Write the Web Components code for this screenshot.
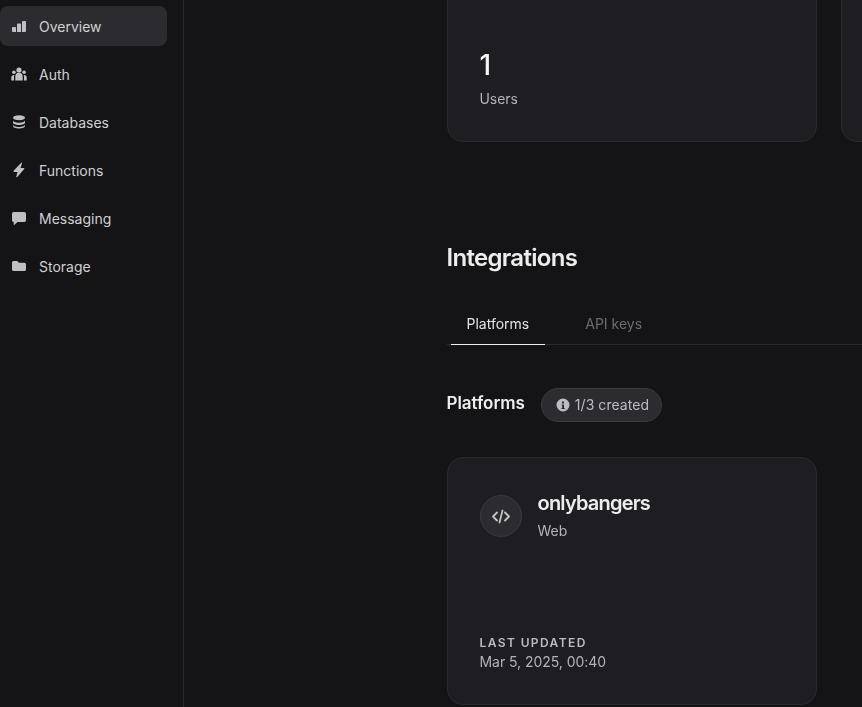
<!DOCTYPE html>
<html>
<head>
<meta charset="utf-8">
<title>Overview</title>
<style>
  html, body { margin: 0; height: 100%; background: #141416; overflow: hidden; }
  body { font-family: Inter, "Liberation Sans", sans-serif; color: #c3c3c6; }
</style>
</head>
<body>
<app-shell>
  <side-nav slot="nav">
    <nav-item active label="Overview"><svg viewBox="0 0 16 16"><path d="M1 10a1 1 0 0 1 1-1h2a1 1 0 0 1 1 1v4H2a1 1 0 0 1-1-1zM6 6.500a1 1 0 0 1 1-1h2a1 1 0 0 1 1 1V14H6zM11 4a1 1 0 0 1 1-1h2a1 1 0 0 1 1 1v9a1 1 0 0 1-1 1h-3z"/></svg></nav-item>
    <nav-item label="Auth"><svg viewBox="0 0 16 16"><circle cx="8" cy="4" r="2.600"/><circle cx="2.900" cy="6.300" r="1.800"/><circle cx="13.100" cy="6.300" r="1.800"/><path d="M4.300 14.500v-4a3.700 3.700 0 0 1 7.400 0v4zM.3 14.500v-3A2.600 2.600 0 0 1 3.400 9 5 5 0 0 0 3 10.500v4zM15.700 14.500v-3A2.600 2.600 0 0 0 12.600 9a5 5 0 0 1 .4 1.500v4z"/></svg></nav-item>
    <nav-item label="Databases"><svg viewBox="0 0 16 16"><ellipse cx="8" cy="3.800" rx="6" ry="2.500"/><path d="M2 6.300c0 1.400 2.700 2.500 6 2.500s6-1.100 6-2.500v2.300c0 1.400-2.700 2.500-6 2.500s-6-1.100-6-2.500zM2 10.500c0 1.400 2.700 2.500 6 2.500s6-1.100 6-2.500V12c0 1.400-2.700 2.500-6 2.500S2 13.400 2 12z"/></svg></nav-item>
    <nav-item label="Functions"><svg viewBox="0 0 16 16"><path d="M10 1 2.600 8.800c-.4.400-.1 1.100.5 1.100h3.400l-1.200 4.600c-.2.600.6 1 1 .6l6.900-8c.4-.4.100-1.100-.5-1.100H9.500l1.500-4.500c.2-.6-.6-1-1-.5z"/></svg></nav-item>
    <nav-item label="Messaging"><svg viewBox="0 0 16 16"><path d="M1 3.700A1.700 1.700 0 0 1 2.700 2h10.600A1.700 1.700 0 0 1 15 3.700v6.600a1.700 1.700 0 0 1-1.700 1.700H6.500l-3 2.800c-.3.300-.8.100-.8-.3V12A1.700 1.700 0 0 1 1 10.300z"/></svg></nav-item>
    <nav-item label="Storage"><svg viewBox="0 0 16 16"><path d="M1 4.500A1.500 1.500 0 0 1 2.500 3h3.700l1.800 1.800h5.500A1.500 1.500 0 0 1 15 6.300v5.200a1.500 1.500 0 0 1-1.500 1.500h-11A1.500 1.500 0 0 1 1 11.500z"/></svg></nav-item>
  </side-nav>
  <overview-page>
    <stat-row>
      <stat-card value="1" label="Users"></stat-card>
      <stat-card></stat-card>
    </stat-row>
    <h-title>Integrations</h-title>
    <tab-bar>
      <tab-link active>Platforms</tab-link>
      <tab-link>API keys</tab-link>
    </tab-bar>
    <section-head>
      <span>Platforms</span>
      <count-pill slot="pill">1/3 created</count-pill>
    </section-head>
    <platform-card name="onlybangers" kind="Web" updated="Mar 5, 2025, 00:40"></platform-card>
  </overview-page>
</app-shell>

<script>
function comp(name, html, init) {
  customElements.define(name, class extends HTMLElement {
    constructor() {
      super();
      this.attachShadow({mode: 'open'}).innerHTML = html;
    }
    connectedCallback() {
      if (init) init(this);
    }
  });
}

comp('app-shell', `
  <style>
    :host { display: flex; height: 707px; overflow: hidden; }
  </style>
  <slot name="nav"></slot>
  <slot></slot>
`);

comp('side-nav', `
  <style>
    :host { display: flex; flex-direction: column; gap: 8px; box-sizing: border-box; width: 184px; flex: none; height: 100%; padding: 6px 16px 0 0; border-right: 1px solid #2b2b2f; }
  </style>
  <slot></slot>
`);

comp('nav-item', `
  <style>
    :host { display: flex; align-items: center; gap: 12px; height: 40px; padding-left: 11px; border-radius: 8px; font-size: 14px; color: #d0d0d3; }
    :host([active]) { background: #2c2c30; }
    ::slotted(svg) { width: 16px; height: 16px; fill: #c0c0c4; flex: none; }
  </style>
  <slot></slot><span></span>
`, el => { el.shadowRoot.querySelector('span').textContent = el.getAttribute('label'); });

comp('overview-page', `
  <style>
    :host { display: block; flex: 1; min-width: 0; padding-left: 263px; overflow: hidden; }
    .inner { margin-top: -40px; will-change: transform; }
  </style>
  <div class="inner"><slot></slot></div>
`);

comp('stat-row', `
  <style>
    :host { display: flex; gap: 24px; width: 760px; }
  </style>
  <slot></slot>
`);

comp('stat-card', `
  <style>
    :host { display: flex; flex-direction: column; justify-content: flex-end; box-sizing: border-box; width: 370px; height: 182px; flex: none; padding: 0 32px 32px 31.500px; background: #1e1e22; border: 1px solid #2b2b2f; border-radius: 16px; }
    .v { font-size: 28px; line-height: 32px; font-weight: 500; color: #f5f5f5; }
    .l { font-size: 14px; line-height: 20px; margin-top: 8px; color: #b4b4b8; letter-spacing: -.05px; }
  </style>
  <div class="v"></div><div class="l"></div>
`, el => {
  el.shadowRoot.querySelector('.v').textContent = el.getAttribute('value') || '';
  el.shadowRoot.querySelector('.l').textContent = el.getAttribute('label') || '';
});

comp('h-title', `
  <style>
    :host { display: block; margin-top: 100px; margin-left: -.5px; font-size: 24px; line-height: 32px; font-weight: 600; letter-spacing: -.7px; color: #ededee; }
  </style>
  <slot></slot>
`);

comp('tab-bar', `
  <style>
    :host { display: flex; gap: 25px; margin-top: 27px; height: 44px; width: 415px; box-sizing: border-box; padding-left: 4px; border-bottom: 1px solid #2b2b2f; }
  </style>
  <slot></slot>
`);

comp('tab-link', `
  <style>
    :host { display: block; box-sizing: border-box; height: 44px; line-height: 40px; padding: 3px 15.500px 0; font-size: 14px; color: #6c6c71; }
    :host([active]) { color: #e4e4e6; border-bottom: 1px solid #ededee; }
  </style>
  <slot></slot>
`);

comp('section-head', `
  <style>
    :host { display: flex; align-items: center; gap: 16px; margin-top: 43px; margin-left: -.5px; font-size: 17px; line-height: 34px; font-weight: 600; letter-spacing: -.05px; color: #ededee; }
    .t { position: relative; top: -2px; }
  </style>
  <div class="t"><slot></slot></div>
  <slot name="pill"></slot>
`);

comp('count-pill', `
  <style>
    :host { display: flex; align-items: center; gap: 5px; box-sizing: border-box; height: 34px; padding: 0 11.500px 0 14px; background: #2c2c30; border: 1px solid #3a3a3f; border-radius: 17px; font-size: 14px; font-weight: 400; letter-spacing: .05px; color: #bdbdc1; }
    svg { width: 14px; height: 14px; fill: #bdbdc1; }
  </style>
  <svg viewBox="0 0 14 14"><path fill-rule="evenodd" d="M7 .5a6.500 6.500 0 1 0 0 13 6.500 6.500 0 0 0 0-13zM6 3.500h2v2H6zM5.700 6.500H8V10h.8v1H5.400v-1h.8V7.500h-.5z"/></svg>
  <slot></slot>
`);

comp('platform-card', `
  <style>
    :host { display: flex; flex-direction: column; justify-content: space-between; box-sizing: border-box; width: 370px; height: 248px; margin-top: 35px; padding: 32px 32px 32px 31.500px; background: #1e1e22; border: 1px solid #2b2b2f; border-radius: 16px; }
    .top { display: flex; gap: 16px; margin-top: 5px; }
    .ic { display: flex; align-items: center; justify-content: center; box-sizing: border-box; width: 42px; height: 42px; background: #2c2c30; border: 1px solid #3a3a3f; border-radius: 50%; flex: none; }
    .ic svg { width: 18px; height: 18px; fill: none; stroke: #c4c4c7; stroke-width: 1.800; stroke-linecap: round; stroke-linejoin: round; }
    .name { font-size: 20px; line-height: 24px; font-weight: 600; letter-spacing: -.8px; color: #ededee; margin-top: -4px; }
    .kind { font-size: 14px; line-height: 20px; margin-top: 6px; color: #b4b4b8; }
    .cap { font-size: 12px; line-height: 16px; margin-bottom: 1px; font-weight: 600; letter-spacing: 1.400px; color: #bcbcc0; }
    .date { font-size: 14px; line-height: 20px; color: #b4b4b8; letter-spacing: -.05px; }
  </style>
  <div class="top">
    <div class="ic"><svg viewBox="0 0 18 18"><path d="M5 5.500 1 9.500l4 4M13 5.500l4 4-4 4M10.500 3.500l-3 12"/></svg></div>
    <div><div class="name"></div><div class="kind"></div></div>
  </div>
  <div>
    <div class="cap">LAST UPDATED</div>
    <div class="date"></div>
  </div>
`, el => {
  const s = el.shadowRoot;
  s.querySelector('.name').textContent = el.getAttribute('name');
  s.querySelector('.kind').textContent = el.getAttribute('kind');
  s.querySelector('.date').textContent = el.getAttribute('updated');
});
</script>
</body>
</html>
